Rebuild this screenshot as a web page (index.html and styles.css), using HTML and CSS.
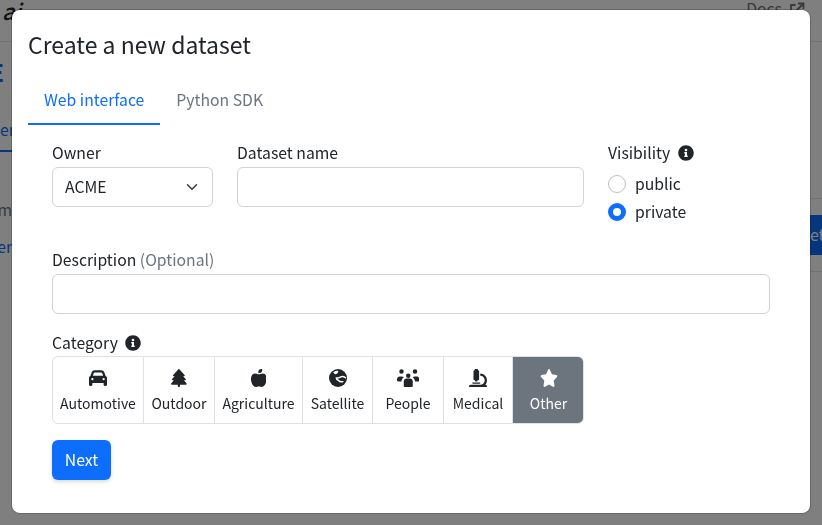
FILE: index.html

```html
<!DOCTYPE html>
<html>
<head>
<meta charset="UTF-8">
<title>Create a new dataset</title>
<link rel="stylesheet" href="styles.css">
</head>
<body>

	<div class="page">
		<header class="topbar">
			<span class="logo">ai</span>
			<span class="docs">Docs
				<svg class="docs-icon" viewBox="0 0 16 16"><path d="M6.500 3H2v11h11V9.500M9 1.500h5.500V7M14.500 1.500L7 9" fill="none" stroke="currentColor" stroke-width="1.800"/></svg>
			</span>
		</header>
		<div class="behind">
			<div class="behind-left">
				<div class="frag frag-title">E</div>
				<div class="frag frag-tab">er</div>
				<div class="frag frag-name">m</div>
				<div class="frag frag-link">er</div>
			</div>
			<div class="behind-right">
				<div class="frag-btn">et</div>
			</div>
		</div>
	</div>

	<div class="backdrop"></div>

	<div class="modal">
		<h4 class="modal-title">Create a new dataset</h4>

		<ul class="tabs">
			<li class="tab active">Web interface</li>
			<li class="tab">Python SDK</li>
		</ul>

		<form class="modal-body">
			<div class="row">
				<div class="col-owner">
					<label class="form-label">Owner</label>
					<div class="select">
						<span>ACME</span>
						<svg class="chevron" viewBox="0 0 16 16"><path d="M2 5l6 6 6-6" fill="none" stroke="#343a40" stroke-width="2" stroke-linecap="round" stroke-linejoin="round"/></svg>
					</div>
				</div>
				<div class="col-name">
					<label class="form-label">Dataset name</label>
					<input type="text" class="input">
				</div>
				<div class="col-visibility">
					<label class="form-label">Visibility
						<svg class="info" viewBox="0 0 512 512"><path d="M256 8C119.043 8 8 119.083 8 256c0 136.997 111.043 248 248 248s248-111.003 248-248C504 119.083 392.957 8 256 8zm0 110c23.196 0 42 18.804 42 42s-18.804 42-42 42-42-18.804-42-42 18.804-42 42-42zm56 254c0 6.627-5.373 12-12 12h-88c-6.627 0-12-5.373-12-12v-24c0-6.627 5.373-12 12-12h12v-64h-12c-6.627 0-12-5.373-12-12v-24c0-6.627 5.373-12 12-12h64c6.627 0 12 5.373 12 12v100h12c6.627 0 12 5.373 12 12v24z"/></svg>
					</label>
					<div class="radio"><span class="radio-dot"></span>public</div>
					<div class="radio"><span class="radio-dot checked"></span>private</div>
				</div>
			</div>

			<div class="field-desc">
				<label class="form-label">Description <span class="muted">(Optional)</span></label>
				<input type="text" class="input">
			</div>

			<div class="field-cat">
				<label class="form-label cat-label">Category
					<svg class="info" viewBox="0 0 512 512"><path d="M256 8C119.043 8 8 119.083 8 256c0 136.997 111.043 248 248 248s248-111.003 248-248C504 119.083 392.957 8 256 8zm0 110c23.196 0 42 18.804 42 42s-18.804 42-42 42-42-18.804-42-42 18.804-42 42-42zm56 254c0 6.627-5.373 12-12 12h-88c-6.627 0-12-5.373-12-12v-24c0-6.627 5.373-12 12-12h12v-64h-12c-6.627 0-12-5.373-12-12v-24c0-6.627 5.373-12 12-12h64c6.627 0 12 5.373 12 12v100h12c6.627 0 12 5.373 12 12v24z"/></svg>
				</label>
				<div class="btn-group">
					<div class="cat">
						<svg class="cat-icon" viewBox="0 0 512 512"><path d="M135.200 117.400L109.100 192H402.900l-26.100-74.600C372.300 104.600 360.200 96 346.600 96H165.400c-13.600 0-25.700 8.600-30.200 21.400zM39.600 196.800L74.800 96.300C88.300 57.800 124.600 32 165.400 32H346.600c40.800 0 77.100 25.800 90.600 64.300l35.200 100.500c23.200 9.600 39.600 32.500 39.600 59.200V400v48c0 17.700-14.300 32-32 32H448c-17.700 0-32-14.300-32-32V400H96v48c0 17.700-14.300 32-32 32H32c-17.700 0-32-14.300-32-32V400 256c0-26.700 16.400-49.600 39.600-59.200zM128 288a32 32 0 1 0-64 0 32 32 0 1 0 64 0zm288 32a32 32 0 1 0 0-64 32 32 0 1 0 0 64z"/></svg>
						Automotive
					</div>
					<div class="cat">
						<svg class="cat-icon" viewBox="0 0 448 512"><path d="M210.600 5.900L62 169.400c-3.900 4.200-6 9.800-6 15.500C56 197.700 66.300 208 79.100 208H104L30.600 281.400c-4.200 4.200-6.600 10-6.600 16C24 309.900 34.100 320 46.600 320H80L5.400 409.500C1.900 413.700 0 419 0 424.500c0 13 10.500 23.500 23.500 23.500H192v32c0 17.700 14.300 32 32 32s32-14.300 32-32V448H424.500c13 0 23.500-10.500 23.500-23.500c0-5.500-1.900-10.800-5.400-15L368 320h33.400c12.500 0 22.600-10.100 22.600-22.600c0-6-2.400-11.800-6.600-16L344 208h24.900c12.700 0 23.100-10.300 23.100-23.100c0-5.700-2.100-11.300-6-15.500L237.400 5.900C234 2.100 229.100 0 224 0s-10 2.100-13.400 5.900z"/></svg>
						Outdoor
					</div>
					<div class="cat">
						<svg class="cat-icon" viewBox="0 0 448 512"><path d="M224 112c-8.800 0-16-7.200-16-16V80c0-44.200 35.800-80 80-80h16c8.800 0 16 7.200 16 16V32c0 44.200-35.800 80-80 80H224zM0 288c0-76.300 35.700-160 112-160c27.300 0 59.700 10.300 82.700 19.300c18.800 7.300 39.900 7.300 58.700 0C276.300 138.300 308.700 128 336 128c76.300 0 112 83.700 112 160c0 96-64 224-144 224c-18.900 0-32-16-80-16s-61.100 16-80 16C64 512 0 384 0 288z"/></svg>
						Agriculture
					</div>
					<div class="cat">
						<svg class="cat-icon" viewBox="0 0 512 512"><circle cx="256" cy="256" r="256"/><path d="M150 96c30-22 70-30 90-26 8 24-16 46-40 52-24 8-42-6-50-26zM470 250c-50-40-110-40-150-20-40 22-70 34-110 24 0 34 26 58 56 66 30 40 90 50 130 40" fill="none" stroke="#fff" stroke-width="42" stroke-linecap="round"/><path class="globe-gap" d="M300 120l70-34 40 60-70 30z"/></svg>
						Satellite
					</div>
					<div class="cat">
						<svg class="cat-icon" viewBox="0 0 640 512"><path d="M64 70a64 64 0 1 1 128 0A64 64 0 1 1 64 70zM448 70a64 64 0 1 1 128 0 64 64 0 1 1-128 0zM256 190a64 64 0 1 1 128 0 64 64 0 1 1-128 0zM0 296c0-44 36-80 80-80h56c22 0 42 8 58 22-38 22-62 66-66 114H32c-18 0-32-14-32-32V296zM504 216h56c44 0 80 36 80 80v24c0 18-14 32-32 32H512c-4-48-28-92-66-114 16-14 36-22 58-22zM192 352c0-44 36-80 80-80h96c44 0 80 36 80 80v128c0 18-14 32-32 32H224c-18 0-32-14-32-32V352z"/></svg>
						People
					</div>
					<div class="cat">
						<svg class="cat-icon" viewBox="0 0 512 512"><path d="M160 320h12v16c0 8.840 7.160 16 16 16h40c8.840 0 16-7.160 16-16v-16h12c17.670 0 32-14.330 32-32V64c0-17.670-14.330-32-32-32V16c0-8.840-7.160-16-16-16h-64c-8.840 0-16 7.160-16 16v16c-17.670 0-32 14.330-32 32v224c0 17.670 14.330 32 32 32zm304 128h-1.290C493.240 413.990 512 369.200 512 320c0-105.880-86.120-192-192-192v64c70.580 0 128 57.420 128 128s-57.420 128-128 128H48c-26.510 0-48 21.490-48 48 0 8.840 7.160 16 16 16h480c8.840 0 16-7.160 16-16 0-26.510-21.490-48-48-48zm-360-32h208c4.420 0 8-3.580 8-8v-16c0-4.420-3.580-8-8-8H104c-4.420 0-8 3.580-8 8v16c0 4.420 3.580 8 8 8z"/></svg>
						Medical
					</div>
					<div class="cat cat-active">
						<svg class="cat-icon star-icon" viewBox="0 0 576 512" preserveAspectRatio="none"><path d="M316.900 18C311.600 7 300.400 0 288.100 0s-23.400 7-28.800 18L195 150.300 51.400 171.500c-12 1.800-22 10.200-25.700 21.700s-.7 24.200 7.900 32.700L137.800 329 113.200 474.700c-2 12 3 24.200 12.900 31.300s23 8 33.800 2.300l128.300-68.500 128.300 68.500c10.800 5.700 23.900 4.900 33.800-2.300s14.900-19.300 12.900-31.300L438.500 329 542.700 225.900c8.600-8.500 11.700-21.200 7.900-32.700s-13.700-19.900-25.700-21.700L381.200 150.300 316.900 18z"/></svg>
						Other
					</div>
				</div>
			</div>

			<button type="button" class="btn-next">Next</button>
		</form>
	</div>

</body>
</html>
```

FILE: styles.css

```css
* {
	box-sizing: border-box;
}

body {
	margin: 0;
	height: 525px;
	overflow: hidden;
	background: #fff;
	color: #212529;
	font-family: "Noto Sans CJK JP", "Noto Sans", sans-serif;
	font-size: 15.75px;
	line-height: 24px;
}

/* page behind the dialog */
.page {
	height: 525px;
}

.topbar {
	display: flex;
	justify-content: space-between;
	height: 42px;
	padding: 0 17px 0 0;
	border-bottom: 1px solid #dee2e6;
	overflow: hidden;
}

.logo {
	font-size: 22px;
	font-style: italic;
	font-weight: 500;
	line-height: 20px;
	margin-left: 2px;
	color: #212529;
}

.docs {
	display: flex;
	gap: 7px;
	height: 24px;
	margin-top: -3px;
	color: #6c757d;
}

.docs-icon {
	width: 16px;
	height: 16px;
	margin-top: 5px;
}

.behind {
	display: flex;
	justify-content: space-between;
}

.behind-left {
	width: 12px;
	overflow: hidden;
	display: flex;
	flex-direction: column;
	align-items: flex-end;
}

.frag {
	white-space: nowrap;
}

.frag-title {
	margin: 18px 8px 0 0;
	font-size: 24px;
	font-weight: 700;
	color: #0d6efd;
}

.frag-tab {
	margin-top: 34px;
	width: 100%;
	height: 34px;
	border-bottom: 2px solid #0d6efd;
	color: #0d6efd;
	text-align: right;
}

.frag-name {
	margin-top: 46px;
	color: #6c757d;
}

.frag-link {
	margin-top: 13px;
	color: #0d6efd;
}

.behind-right {
	width: 12px;
	margin-top: 156px;
	border-top: 1px solid #dee2e6;
	height: 74px;
	border-bottom: 1px solid #dee2e6;
	padding-top: 16px;
}

.frag-btn {
	height: 40px;
	padding-top: 8px;
	background: #0d6efd;
	color: #fff;
	line-height: 24px;
}

.backdrop {
	position: fixed;
	inset: 0;
	background: rgba(0, 0, 0, .5);
}

/* dialog */
.modal {
	position: fixed;
	left: 12px;
	top: 10px;
	width: 798px;
	height: 503px;
	background: #fff;
	border-radius: 8px;
	box-shadow: 0 0 0 1px rgba(0, 0, 0, .2);
	padding: 16px;
}

.modal-title {
	margin: 0;
	font-size: 23px;
	font-weight: 400;
	line-height: 36px;
}

.tabs {
	display: flex;
	list-style: none;
	margin: 18px 0 0;
	padding: 0;
	color: #6c757d;
}

.tab {
	padding: 8px 16px;
	height: 45px;
}

.tab.active {
	color: #0d6efd;
	border-bottom: 2px solid #0d6efd;
}

.modal-body {
	padding: 15px 24px 0;
}

.row {
	display: flex;
	gap: 24px;
}

.col-owner {
	width: 161px;
}

.col-name {
	width: 347px;
}

.form-label {
	display: block;
	height: 25px;
	padding-top: 1px;
	margin-bottom: 2px;
}

.select {
	display: flex;
	justify-content: space-between;
	align-items: center;
	height: 40px;
	padding: 0 14px 0 12px;
	border: 1px solid #ced4da;
	border-radius: 6px;
}

.chevron {
	width: 12px;
	height: 12px;
}

.input {
	display: block;
	width: 100%;
	height: 40px;
	border: 1px solid #ced4da;
	border-radius: 6px;
	background: #fff;
}

.info {
	width: 16px;
	height: 16px;
	margin-left: 4px;
	vertical-align: -2px;
	fill: #212529;
}

.radio {
	display: flex;
	align-items: center;
	gap: 9px;
	height: 28px;
}

.col-visibility .form-label {
	margin-bottom: 5px;
}

.radio-dot {
	width: 18px;
	height: 18px;
	border: 1px solid #bfbfbf;
	border-radius: 50%;
}

.radio-dot.checked {
	border: 5px solid #0d6efd;
}

.field-desc {
	margin-top: 21px;
}

.field-cat {
	margin-top: 16px;
}

.cat-label {
	margin-bottom: 1px;
}

.muted {
	color: #6c757d;
}

.btn-group {
	display: grid;
	grid-template-columns: 91px 71px 88px 70px 71px 69px 1fr;
	width: 532px;
	height: 68px;
	border: 1px solid #dee2e6;
	border-radius: 6px;
	overflow: hidden;
}

.cat {
	display: flex;
	flex-direction: column;
	align-items: center;
	padding-top: 12px;
	font-size: 14px;
	line-height: 24px;
	border-right: 1px solid #dee2e6;
	white-space: nowrap;
}

.cat-icon {
	height: 18px;
	margin-bottom: 4px;
	fill: #212529;
}

.cat-active {
	margin: -1px -1px -1px 0;
	background: #6c757d;
	color: #fff;
	border: 0;
	padding-top: 13px;
}

.cat-active .cat-icon {
	fill: #fff;
}

.star-icon {
	width: 18px;
}

.globe-gap {
	fill: #212529;
}

.btn-next {
	display: block;
	margin-top: 16px;
	width: 59px;
	height: 40px;
	border: 0;
	border-radius: 6px;
	background: #0d6efd;
	color: #fff;
	font: inherit;
	box-shadow: 0 2px 4px rgba(0, 0, 0, .15);
}
```
